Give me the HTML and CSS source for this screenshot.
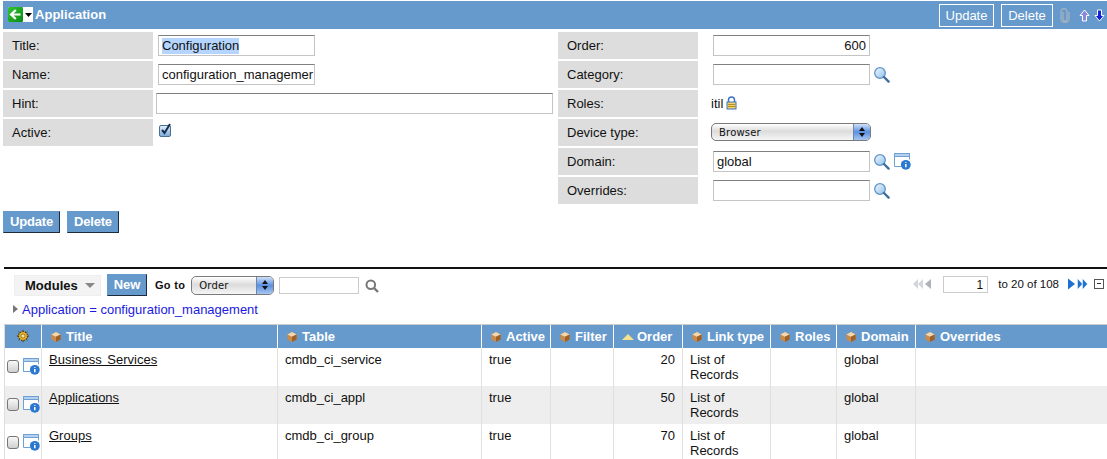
FILE: index.html
```html
<!DOCTYPE html>
<html lang="en">
<head>
<meta charset="utf-8">
<title>Application</title>
<link rel="stylesheet" href="styles.css">
</head>
<body>
<svg class="defs" width="0" height="0" aria-hidden="true">
  <defs>
    <linearGradient id="lens" x1="0" y1="0" x2="1" y2="1"><stop offset="0" stop-color="#f2f9ff"/><stop offset="1" stop-color="#8fc0ea"/></linearGradient>
    <linearGradient id="green" x1="0" y1="0" x2="1" y2="1"><stop offset="0" stop-color="#35c435"/><stop offset="1" stop-color="#0a8a12"/></linearGradient>
    <linearGradient id="chk" x1="0" y1="0" x2="0" y2="1"><stop offset="0" stop-color="#e6f0fb"/><stop offset="1" stop-color="#7ba7d8"/></linearGradient>
    <symbol id="mag" viewBox="0 0 17 17">
      <circle cx="7" cy="7" r="5.3" fill="url(#lens)" stroke="#5f94c4" stroke-width="1.3"/>
      <path d="M11 11l4.6 4.6" stroke="#3f6f9e" stroke-width="2.4" stroke-linecap="round"/>
    </symbol>
    <symbol id="info" viewBox="0 0 17 17">
      <path d="M7 13.500H0.500V0.500h15v6" fill="#fff" stroke="#6ea0d8" stroke-width="1"/>
      <path d="M0.500 0.500h15v3h-15z" fill="#b5d1ee" stroke="#6ea0d8" stroke-width="1"/>
      <circle cx="11.800" cy="11.800" r="4.900" fill="#2a78cf"/>
      <path d="M11.800 9.200v.9M11.800 11v3.200" stroke="#fff" stroke-width="1.500"/>
    </symbol>
    <symbol id="cube" viewBox="0 0 12 12">
      <path d="M6 1l4.600 2.400v5.200L6 11 1.400 8.600V3.400z" fill="#c98a4a"/>
      <path d="M6 1l4.600 2.400L6 5.800 1.400 3.400z" fill="#f3d7ae"/>
      <path d="M6 5.800V11l4.600-2.400V3.400z" fill="#9c6229"/>
    </symbol>
  </defs>
</svg>

<header class="titlebar">
  <div class="title-left">
    <span class="backbox">
      <svg class="back" width="15" height="15" viewBox="0 0 15 15"><rect width="15" height="15" rx="1" fill="url(#green)"/><path d="M12.500 7.500H4M7.800 3L3 7.500l4.800 4.500" fill="none" stroke="#fff" stroke-width="2.200"/></svg>
      <svg width="7" height="4" viewBox="0 0 7 4"><path d="M0 0h7L3.500 4z" fill="#000"/></svg>
    </span>
    <span class="title-text">Application</span>
  </div>
  <div class="title-right">
    <span class="hbtn hbtn-update">Update</span>
    <span class="hbtn hbtn-delete">Delete</span>
    <svg class="clip" width="10" height="15" viewBox="0 0 10 15"><path d="M3 4v7a2 2 0 0 0 4 0V3.500a3 3 0 0 0-6 0V11a4 3.500 0 0 0 8 0V4" fill="none" stroke="#a4b2c0" stroke-width="1.300"/></svg>
    <svg class="up" width="11" height="13" viewBox="0 0 11 13"><path d="M5.500 1L10 6.500H7.500V12h-4V6.500H1z" fill="#8d86e0" stroke="#fff"/></svg>
    <svg class="down" width="11" height="13" viewBox="0 0 11 13"><path d="M5.500 12L10 6.500H7.500V1h-4v5.500H1z" fill="#1420d8" stroke="#fff"/></svg>
  </div>
</header>

<form class="form">
  <div class="col col-l">
    <div class="row"><label class="lbl">Title:</label><div class="val"><span class="inp inp-s"><span class="sel">Configuration</span></span></div></div>
    <div class="row"><label class="lbl">Name:</label><div class="val"><span class="inp inp-s">configuration_managemer</span></div></div>
    <div class="row"><label class="lbl">Hint:</label><div class="val val-wide"><span class="inp inp-w"></span></div></div>
    <div class="row"><label class="lbl">Active:</label><div class="val val-check">
      <svg width="13" height="14" viewBox="0 0 13 14"><rect x="0.500" y="2.500" width="11" height="11" rx="1.500" fill="url(#chk)" stroke="#4a6f96"/><path d="M3 7l2.500 3L11 1" fill="none" stroke="#14304f" stroke-width="2"/></svg>
    </div></div>
  </div>
  <div class="col col-r">
    <div class="row"><label class="lbl">Order:</label><div class="val"><span class="inp inp-s num">600</span></div></div>
    <div class="row"><label class="lbl">Category:</label><div class="val"><span class="inp inp-s"></span><svg class="ic" width="17" height="17"><use href="#mag"/></svg></div></div>
    <div class="row"><label class="lbl">Roles:</label><div class="val val-roles">itil
      <svg width="11" height="14" viewBox="0 0 11 14"><path d="M2.500 6V4a3 3 0 0 1 6 0v2" fill="none" stroke="#3f72c4" stroke-width="1.500"/><rect x="1" y="6" width="9" height="7" fill="#f1d264" stroke="#3f72c4"/><path d="M2 8.500h7M2 10.500h7" stroke="#b08f25"/></svg>
    </div></div>
    <div class="row"><label class="lbl">Device type:</label><div class="val val-sel"><span class="mac mac-device">Browser<span class="stepper"><i class="tri-u"></i><i class="tri-d"></i></span></span></div></div>
    <div class="row"><label class="lbl">Domain:</label><div class="val"><span class="inp inp-s">global</span><svg class="ic" width="17" height="17"><use href="#mag"/></svg><svg class="ic2" width="17" height="17"><use href="#info"/></svg></div></div>
    <div class="row"><label class="lbl">Overrides:</label><div class="val"><span class="inp inp-s"></span><svg class="ic" width="17" height="17"><use href="#mag"/></svg></div></div>
  </div>
</form>

<div class="actions">
  <span class="btn btn-update">Update</span>
  <span class="btn btn-delete">Delete</span>
</div>

<section class="list">
  <div class="toolbar">
    <div class="tool-left">
      <span class="modules">Modules<svg width="10" height="5" viewBox="0 0 10 5"><path d="M0 0h10L5 5z" fill="#888"/></svg></span>
      <span class="btn btn-new">New</span>
      <span class="goto">Go to</span>
      <span class="mac mac-goto">Order<span class="stepper"><i class="tri-u"></i><i class="tri-d"></i></span></span>
      <span class="gobox"></span>
      <svg class="gomag" width="14" height="14" viewBox="0 0 14 14"><circle cx="5.800" cy="5.800" r="4.300" fill="none" stroke="#777" stroke-width="2"/><path d="M9 9l4 4" stroke="#777" stroke-width="2.400"/></svg>
    </div>
    <div class="pager">
      <svg width="21" height="12" viewBox="0 0 21 12"><path d="M6 1L1 6l5 5zM11 1L6 6l5 5z" fill="#d2d5d9"/><path d="M19 1l-6 5 6 5z" fill="#aeb2b7"/></svg>
      <span class="pagebox">1</span>
      <span class="pagetext">to 20 of 108</span>
      <svg width="20" height="12" viewBox="0 0 20 12"><path d="M0 .5l7 5.500-7 5.500z" fill="#1d6fd0"/><path d="M9.500 .5l5 5.500-5 5.500zM14.500 .5l5 5.500-5 5.500z" fill="#1d6fd0" stroke="#fff" stroke-width=".5"/></svg>
      <span class="collapse"></span>
    </div>
  </div>
  <div class="filter"><i class="tri-r"></i><span class="filter-text">Application = configuration_management</span></div>
  <table class="grid">
    <colgroup>
      <col class="c0"><col class="c1"><col class="c2"><col class="c3"><col class="c4"><col class="c5"><col class="c6"><col class="c7"><col class="c8"><col class="c9">
    </colgroup>
    <thead>
      <tr>
        <th class="gear"><svg width="14" height="14" viewBox="0 0 14 14"><circle cx="7" cy="7" r="4.500" fill="#e9b22c" stroke="#4b3c14" stroke-width="1.200" stroke-dasharray="1.500 1"/><circle cx="7" cy="7" r="2" fill="#fbe58a" stroke="#6a5212" stroke-width=".6"/><path d="M7 .8v1.500M7 11.700v1.500M.8 7h1.500M11.700 7h1.500M2.600 2.600l1 1M10.400 10.400l1 1M2.600 11.400l1-1M10.400 3.600l1-1" stroke="#4b3c14"/></svg></th>
        <th><svg class="cube" width="12" height="12"><use href="#cube"/></svg>Title</th>
        <th><svg class="cube" width="12" height="12"><use href="#cube"/></svg>Table</th>
        <th><svg class="cube" width="12" height="12"><use href="#cube"/></svg>Active</th>
        <th><svg class="cube" width="12" height="12"><use href="#cube"/></svg>Filter</th>
        <th class="sorted"><svg class="sort" width="12" height="6" viewBox="0 0 12 6"><path d="M6 0l6 6H0z" fill="#f4e28e"/></svg>Order</th>
        <th><svg class="cube" width="12" height="12"><use href="#cube"/></svg>Link type</th>
        <th><svg class="cube" width="12" height="12"><use href="#cube"/></svg>Roles</th>
        <th><svg class="cube" width="12" height="12"><use href="#cube"/></svg>Domain</th>
        <th><svg class="cube" width="12" height="12"><use href="#cube"/></svg>Overrides</th>
      </tr>
    </thead>
    <tbody>
      <tr>
        <td class="tick"><span class="cb"></span><svg width="17" height="17"><use href="#info"/></svg></td>
        <td><a class="link">Business Services</a></td><td>cmdb_ci_service</td><td>true</td><td></td><td class="num">20</td><td>List of Records</td><td></td><td>global</td><td></td>
      </tr>
      <tr class="alt">
        <td class="tick"><span class="cb"></span><svg width="17" height="17"><use href="#info"/></svg></td>
        <td><a class="link">Applications</a></td><td>cmdb_ci_appl</td><td>true</td><td></td><td class="num">50</td><td>List of Records</td><td></td><td>global</td><td></td>
      </tr>
      <tr>
        <td class="tick"><span class="cb"></span><svg width="17" height="17"><use href="#info"/></svg></td>
        <td><a class="link">Groups</a></td><td>cmdb_ci_group</td><td>true</td><td></td><td class="num">70</td><td>List of Records</td><td></td><td>global</td><td></td>
      </tr>
    </tbody>
  </table>
</section>
</body>
</html>
```
FILE: styles.css
```css
* { box-sizing: border-box; }
html, body { margin: 0; padding: 0; height: 459px; overflow: hidden; background: #fff; }
body { font: 13px/15px "Liberation Sans", Arial, sans-serif; color: #111; }
.defs { position: absolute; }

.titlebar { margin: 1px 0 0 3px; height: 28px; background: #6699cc; display: flex; justify-content: space-between; align-items: center; padding: 0 2px 0 5px; }
.title-left { display: flex; align-items: center; padding-bottom: 1px; }
.backbox { display: flex; align-items: center; gap: 2px; background: #fff; width: 25px; height: 15px; }
.back { display: block; }
.title-text { color: #fff; font-weight: bold; margin-left: 2px; font-size: 13px; letter-spacing: .03px; }
.title-right { display: flex; align-items: center; }
.hbtn { border: 1px solid #fff; color: #fff; height: 23px; line-height: 21px; text-align: center; }
.hbtn-update { width: 55px; margin-right: 7px; }
.hbtn-delete { width: 52px; }
.clip { margin-left: 7px; }
.up { margin-left: 9px; }
.down { margin-left: 4px; }

.form { display: flex; margin: 3px 0 0 3px; height: 172px; }
.col-l { width: 555px; }
.col-r { flex: 1; }
.row { display: flex; height: 27px; margin-bottom: 2px; }
.lbl { background: #dddddd; padding: 0 9px; line-height: 27px; }
.col-l .lbl { width: 150px; }
.col-r .lbl { width: 140px; }
.val { display: flex; align-items: flex-start; padding: 3px 0 0 5px; }
.col-r .val { padding-left: 15px; }
.val-wide { padding-left: 3px; }
.inp { display: block; height: 21px; width: 157px; border: 1px solid #c4c4c4; border-top-color: #808080; background: #fff; padding: 2px 3px; line-height: 16px; white-space: nowrap; overflow: hidden; }
.inp-w { width: 397px; }
.inp.num { text-align: right; }
.sel { background: #b5d5ff; display: inline-block; height: 16px; }
.ic { margin: 2px 0 0 3px; }
.ic2 { margin: 2px 0 0 4px; }
.val-check { padding: 4px 0 0 6px; }
.col-r .val-roles { padding: 6px 0 0 13px; gap: 3px; }
.col-r .val-sel { padding: 4px 0 0 13px; }
.mac { display: inline-flex; align-items: center; justify-content: space-between; background: linear-gradient(#fff, #dcdcdc 45%, #f5f5f5); border: 1px solid #7a7a7a; border-radius: 5px; font-family: "DejaVu Sans", sans-serif; font-size: 10px; letter-spacing: .2px; padding-left: 7px; overflow: hidden; }
.mac-device { width: 160px; height: 18px; }
.mac-goto { width: 83px; height: 19px; margin-left: 6px; }
.stepper { width: 17px; align-self: stretch; background: linear-gradient(#cfe0f7, #5a90e2 50%, #a9c6ee); display: flex; flex-direction: column; align-items: center; justify-content: center; gap: 2px; border-left: 1px solid #6a87ad; }
.tri-u { border: 3px solid transparent; border-top: 0; border-bottom: 4px solid #111; }
.tri-d { border: 3px solid transparent; border-bottom: 0; border-top: 4px solid #111; }

.actions { display: flex; gap: 7px; margin: 7px 0 0 3px; height: 23px; }
.btn { display: block; background: #6699cc; color: #fff; font-weight: bold; border: 1px solid; border-color: #6699cc #1c2c3c #1c2c3c #6699cc; height: 22px; line-height: 19px; text-align: center; letter-spacing: -.2px; }
.btn-update { width: 57px; }
.btn-delete { width: 52px; }

.list { margin: 33px 0 0 4px; border-top: 2px solid #111; }
.toolbar { display: flex; justify-content: space-between; align-items: flex-start; padding: 5px 3px 0 10px; height: 30px; }
.tool-left { display: flex; align-items: center; height: 22px; }
.modules { display: flex; align-items: center; gap: 7px; width: 87px; height: 21px; margin-top: 1px; background: #f3f3f3; border: 1px solid #eee; padding-left: 10px; font-weight: bold; color: #111; }
.btn-new { margin-left: 6px; width: 40px; height: 22px; letter-spacing: 0; }
.goto { margin-left: 8px; font-weight: bold; font-size: 11px; letter-spacing: .3px; }
.mac-goto { margin-left: 6px; }
.gobox { width: 80px; height: 17px; border: 1px solid #ccc; margin-left: 5px; }
.gomag { margin-left: 6px; margin-top: 2px; }
.pager { display: flex; align-items: center; height: 20px; }
.pagebox { width: 45px; height: 17px; border: 1px solid #ccc; margin-left: 10px; text-align: right; padding-right: 4px; font-size: 12px; line-height: 16px; }
.pagetext { font-size: 11.5px; margin: 0 9px 0 10px; }
.collapse { position: relative; width: 10px; height: 10px; border: 1px solid #555; margin-left: 6px; }
.collapse::after { content: ""; position: absolute; left: 2px; top: 3px; width: 4px; height: 1px; background: #333; }
.filter { display: flex; align-items: center; padding-left: 9px; height: 20px; margin-bottom: 5px; }
.tri-r { border: 4px solid transparent; border-right: 0; border-left: 5px solid #777; }
.filter-text { color: #1a1ae0; margin-left: 4px; }

.grid { width: 1103px; border-collapse: collapse; table-layout: fixed; border-left: 1px solid #ddd; }
.c0 { width: 37px; } .c1 { width: 236px; } .c2 { width: 204px; } .c3 { width: 69px; } .c4 { width: 63px; } .c5 { width: 69px; } .c6 { width: 88px; } .c7 { width: 66px; } .c8 { width: 79px; } .c9 { width: 192px; }
.grid th { height: 23px; background: #6699cc; color: #fff; font-weight: bold; text-align: left; padding: 0 0 0 8px; border-left: 1px solid #fff; white-space: nowrap; border-top: 1px solid #ccc; }
.grid th:first-child { border-left: 0; padding: 0; text-align: center; }
.grid th svg { vertical-align: -2px; }
.cube { margin-right: 4px; }
.sort { margin-right: 3px; vertical-align: 1px !important; }
.grid td { height: 38px; padding: 4px 7px 0 7px; vertical-align: top; border-left: 1px solid #e0e0e0; line-height: 15px; }
.grid td:first-child { border-left: 0; }
.alt td { background: #eeeeee; }
.grid td.num { text-align: right; }
.grid td.tick { padding: 10px 0 0 2px; white-space: nowrap; }
.cb { display: inline-block; width: 12px; height: 13px; border: 1px solid #777; border-radius: 3px; background: linear-gradient(#f8f8f8, #cfcfcf); vertical-align: 2px; margin-right: 4px; }
.link { color: #111; text-decoration: underline; word-spacing: 2px; }
```
